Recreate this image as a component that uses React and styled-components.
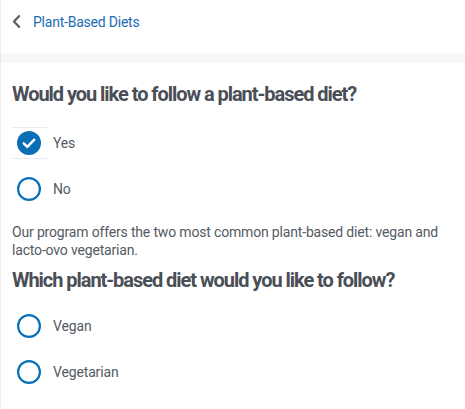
import React, { useState } from "react";
import styled, { createGlobalStyle } from "styled-components";

const Global = createGlobalStyle`
  html, body { margin: 0; padding: 0; background: #ffffff; }
  body { font-family: Roboto, "Liberation Sans", sans-serif; }
  * { box-sizing: border-box; }
`;

const Page = styled.div`
  width: 465px;
  height: 409px;
  border-left: 1px solid #ececec;
  background: #fff;
  overflow: hidden;
`;

const Header = styled.header`
  height: 53px;
  display: flex;
  align-items: center;
  gap: 12px;
  padding: 0 0 10px 11px;
  background: #fff;
`;

const BackLink = styled.a`
  font-size: 14px;
  line-height: 20px;
  color: #1c6db3;
  text-decoration: none;
  letter-spacing: -0.22px;
`;

const Divider = styled.div`
  height: 10px;
  background: #f7f7f7;
`;

const Content = styled.main`
  padding: 19px 12px 0 10px;
`;

const Heading = styled.h2`
  margin: 0 0 ${(p) => p.$mb}px 1px;
  font-size: 20px;
  font-weight: 700;
  color: #4a4f57;
  letter-spacing: -1.05px;
  line-height: 24px;
`;

const Options = styled.div`
  display: flex;
  flex-direction: column;
  gap: 14px;
  margin-bottom: ${(p) => p.$mb || 0}px;
`;

const Option = styled.label`
  display: flex;
  align-items: center;
  gap: 6px;
  height: 32px;
  cursor: pointer;
  font-size: 14px;
  letter-spacing: -0.15px;
  color: #555a62;
`;

const Mark = styled.span`
  width: 36px;
  height: 32px;
  display: flex;
  align-items: center;
  justify-content: center;
  border-top: 1px solid ${(p) => (p.$checked ? "#e6edf6" : "transparent")};
  border-bottom: 1px solid ${(p) => (p.$checked ? "#e6edf6" : "transparent")};
`;

const Text = styled.p`
  margin: 0 0 9px 1px;
  font-size: 14px;
  line-height: 18px;
  letter-spacing: -0.17px;
  color: #555a62;
`;

function Radio({ checked }) {
  return (
    <Mark $checked={checked}>
      {checked ? (
        <svg width="24" height="24" viewBox="0 0 24 24">
          <circle cx="12" cy="12" r="12" fill="#0b6fb8" />
          <path d="M6.7 12.3l3.6 3.6 7-7.2" fill="none" stroke="#fff" strokeWidth="2.4" strokeLinecap="round" strokeLinejoin="round" />
        </svg>
      ) : (
        <svg width="24" height="24" viewBox="0 0 24 24">
          <circle cx="12" cy="12" r="10.9" fill="none" stroke="#0b6fb8" strokeWidth="2.2" />
        </svg>
      )}
    </Mark>
  );
}

function Chevron() {
  return (
    <svg width="9" height="13" viewBox="0 0 9 13">
      <path d="M7 1.2L2 6.5l5 5.3" fill="none" stroke="#5c6067" strokeWidth="2.3" strokeLinecap="round" strokeLinejoin="round" />
    </svg>
  );
}

export default function App() {
  const [plant, setPlant] = useState("yes");
  const [diet, setDiet] = useState(null);
  return (
    <>
      <Global />
      <Page>
        <Header>
          <Chevron />
          <BackLink href="#">Plant-Based Diets</BackLink>
        </Header>
        <Divider />
        <Content>
          <Heading $mb={21}>Would you like to follow a plant-based diet?</Heading>
          <Options $mb={18}>
            <Option onClick={() => setPlant("yes")}>
              <Radio checked={plant === "yes"} />
              Yes
            </Option>
            <Option onClick={() => setPlant("no")}>
              <Radio checked={plant === "no"} />
              No
            </Option>
          </Options>
          <Text>
            Our program offers the two most common plant-based diet: vegan and lacto-ovo vegetarian.
          </Text>
          <Heading $mb={18}>Which plant-based diet would you like to follow?</Heading>
          <Options>
            <Option onClick={() => setDiet("vegan")}>
              <Radio checked={diet === "vegan"} />
              Vegan
            </Option>
            <Option onClick={() => setDiet("vegetarian")}>
              <Radio checked={diet === "vegetarian"} />
              Vegetarian
            </Option>
          </Options>
        </Content>
      </Page>
    </>
  );
}
